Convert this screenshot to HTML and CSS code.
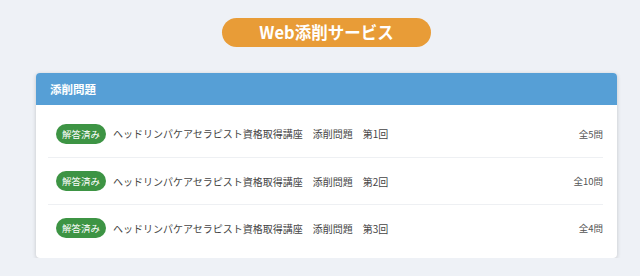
FILE: index.html
```html
<!DOCTYPE html>
<html lang="ja">
<head>
<meta charset="utf-8">
<link rel="stylesheet" href="styles.css">
</head>
<body>
<div class="page">
  <div class="title-wrap"><h1 class="title">Web添削サービス</h1></div>
  <section class="card">
    <header class="card-head">添削問題</header>
    <ul class="list">
      <li class="row">
        <span class="badge">解答済み</span>
        <span class="name">ヘッドリンパケアセラピスト資格取得講座　添削問題　第1回</span>
        <span class="count">全5問</span>
      </li>
      <li class="row">
        <span class="badge">解答済み</span>
        <span class="name">ヘッドリンパケアセラピスト資格取得講座　添削問題　第2回</span>
        <span class="count">全10問</span>
      </li>
      <li class="row">
        <span class="badge">解答済み</span>
        <span class="name">ヘッドリンパケアセラピスト資格取得講座　添削問題　第3回</span>
        <span class="count">全4問</span>
      </li>
    </ul>
  </section>
</div>
</body>
</html>
```
FILE: styles.css
```css
* { box-sizing: border-box; }
html, body { margin: 0; padding: 0; }
body {
  background: #eef1f6;
  font-family: "Noto Sans CJK JP", "Noto Sans", sans-serif;
  color: #444;
}
.page {
  width: 581px;
  margin-left: 36px;
  padding-top: 18px;
}
.title-wrap {
  display: flex;
  justify-content: center;
}
.title {
  margin: 0;
  width: 209px;
  height: 29px;
  border-radius: 15px;
  background: #e89c37;
  color: #fff;
  font-size: 16.5px;
  font-weight: 700;
  line-height: 29px;
  text-align: center;
}
.card {
  margin-top: 26px;
  background: #fff;
  border-radius: 4px;
  box-shadow: 0 1px 4px rgba(0,0,0,0.18);
  overflow: hidden;
}
.card-head {
  height: 32px;
  background: #569fd6;
  color: #fff;
  font-size: 11.5px;
  font-weight: 700;
  line-height: 32px;
  padding-left: 14px;
}
.list {
  list-style: none;
  margin: 0;
  padding: 5px 14px 7px 12px;
}
.row {
  display: flex;
  align-items: center;
  height: 47px;
  padding-left: 8px;
}
.row + .row { border-top: 1px solid #eef0f3; }
.badge {
  flex: none;
  background: #3d9444;
  color: #fff;
  font-size: 9.5px;
  line-height: 20px;
  height: 20px;
  padding: 0 6px;
  border-radius: 10px;
}
.name {
  margin-left: 7px;
  font-size: 10px;
  color: #444;
  flex: 1;
}
.count {
  font-size: 9.5px;
  color: #555;
}
```
